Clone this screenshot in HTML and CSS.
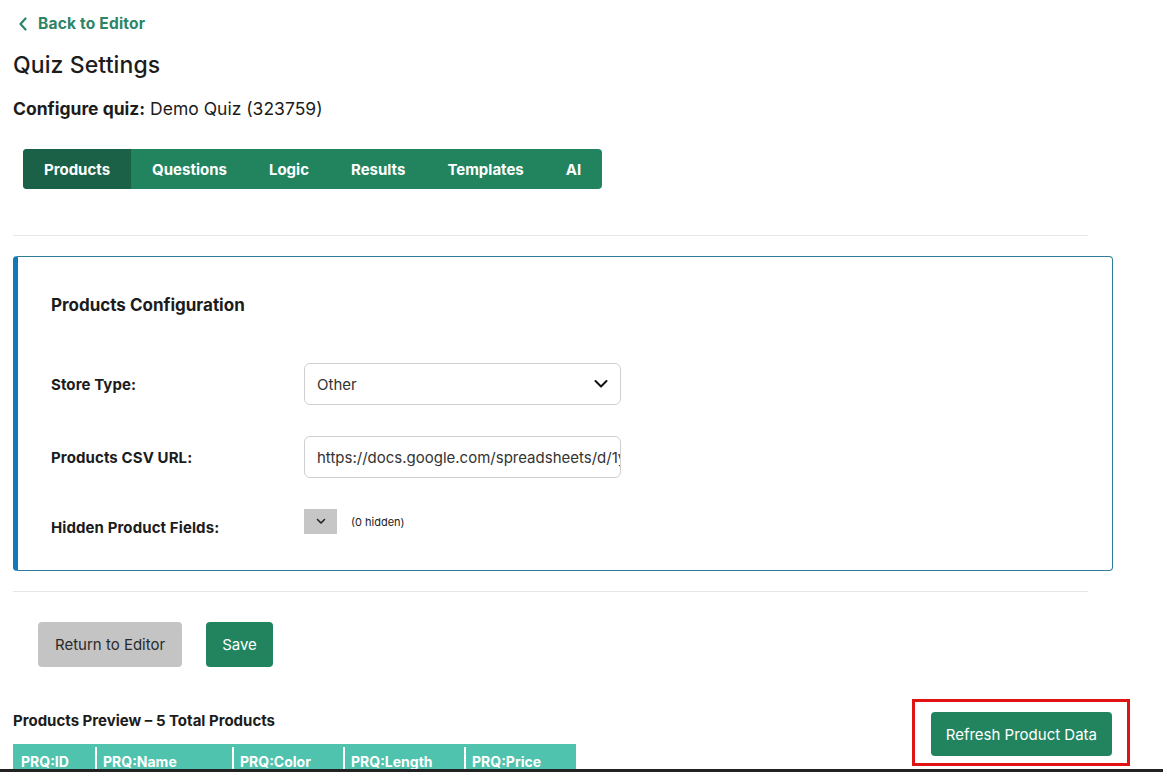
FILE: index.html
```html
<!DOCTYPE html>
<html lang="en">
<head>
    <meta charset="UTF-8">
    <meta name="viewport" content="width=device-width, initial-scale=1.0">
    <title>Quiz Settings</title>
    <link rel="stylesheet" href="styles.css">
</head>
<body>
    <div class="page">
        <a class="back-link" href="#">
            <svg width="10" height="14" viewBox="0 0 10 14"><path d="M7.5 1.5 L2.5 7 L7.5 12.5" fill="none" stroke="currentColor" stroke-width="2.2" stroke-linecap="round" stroke-linejoin="round"/></svg>
            Back to Editor
        </a>
        <h1 class="title">Quiz Settings</h1>
        <p class="subtitle"><b>Configure quiz:</b> Demo Quiz (323759)</p>

        <!-- settings tabs -->
        <nav class="tabs">
            <button class="tab active">Products</button>
            <button class="tab">Questions</button>
            <button class="tab">Logic</button>
            <button class="tab">Results</button>
            <button class="tab">Templates</button>
            <button class="tab">AI</button>
        </nav>

        <hr class="divider">

        <div class="card">
            <h2 class="card-title">Products Configuration</h2>
            <div class="form-row">
                <label class="form-label">Store Type:</label>
                <div class="select">
                    <span>Other</span>
                    <svg width="14" height="10" viewBox="0 0 14 10"><path d="M1.5 2 L7 7.5 L12.5 2" fill="none" stroke="#111" stroke-width="2" stroke-linecap="round" stroke-linejoin="round"/></svg>
                </div>
            </div>
            <div class="form-row">
                <label class="form-label">Products CSV URL:</label>
                <div class="text-input">https://docs.google.com/spreadsheets/d/1y</div>
            </div>
            <div class="form-row hidden-row">
                <label class="form-label">Hidden Product Fields:</label>
                <div class="hidden-fields">
                    <span class="toggle">
                        <svg width="10" height="7" viewBox="0 0 10 7"><path d="M1.5 1.5 L5 5 L8.5 1.5" fill="none" stroke="#222" stroke-width="1.6" stroke-linecap="round" stroke-linejoin="round"/></svg>
                    </span>
                    <span class="hidden-count">(0 hidden)</span>
                </div>
            </div>
        </div>

        <hr class="divider lower">

        <div class="actions">
            <button class="btn btn-grey">Return to Editor</button>
            <button class="btn btn-green">Save</button>
        </div>

        <div class="preview">
            <div class="preview-left">
                <h3 class="preview-title">Products Preview – 5 Total Products</h3>
                <table class="preview-table">
                    <tr>
                        <th class="c-id">PRQ:ID</th>
                        <th class="c-name">PRQ:Name</th>
                        <th class="c-color">PRQ:Color</th>
                        <th class="c-length">PRQ:Length</th>
                        <th class="c-price">PRQ:Price</th>
                    </tr>
                </table>
            </div>
            <div class="refresh-box">
                <button class="btn btn-green refresh">Refresh Product Data</button>
            </div>
        </div>
    </div>
    <div class="screen-edge"></div>
</body>
</html>
```

FILE: styles.css
```css
body {
    margin: 0;
    background: white;
    font-family: Inter, "Noto Sans", sans-serif;
    color: #1c1c1c;
    overflow: hidden;
}
.page {
    padding: 14px 0 0 13px;
    width: 1100px;
}
.back-link {
    display: flex;
    align-items: center;
    gap: 10px;
    margin-left: 5px;
    color: #2b8566;
    font-weight: 700;
    font-size: 15.5px;
    letter-spacing: 0.2px;
    text-decoration: none;
}
.title {
    margin: 18px 0 0;
    font-size: 23px;
    font-weight: 500;
    letter-spacing: 0.1px;
}
.subtitle {
    margin: 19px 0 0;
    font-size: 17.5px;
}
.subtitle b {
    font-weight: 700;
}
.tabs {
    display: inline-flex;
    margin: 30px 0 0 10px;
    background-color: #21845f;
    border-radius: 4px;
    overflow: hidden;
}
.tab {
    height: 40px;
    padding: 0 21px;
    border: none;
    background: none;
    color: white;
    font-family: Inter, "Noto Sans", sans-serif;
    font-size: 15px;
    font-weight: 700;
}
.tab.active {
    background-color: #1a6147;
}
.divider {
    width: 1075px;
    margin: 46px 0 0;
    border: none;
    border-top: 1px solid #e6e6e6;
}
.divider.lower {
    margin-top: 20px;
}
.card {
    margin-top: 20px;
    height: 315px;
    box-sizing: border-box;
    border: 1px solid #2e7d99;
    border-left: 5px solid #1479b5;
    border-radius: 4px;
    padding: 38px 0 0 33px;
}
.card-title {
    margin: 0;
    font-size: 17px;
    font-weight: 700;
}
.form-row {
    display: flex;
    align-items: center;
    margin-top: 48px;
}
.form-row + .form-row {
    margin-top: 31px;
}
.form-label {
    width: 253px;
    font-size: 15px;
    font-weight: 700;
    letter-spacing: 0.1px;
}
.select, .text-input {
    width: 317px;
    height: 42px;
    box-sizing: border-box;
    border: 1px solid #cfcfcf;
    border-radius: 6px;
    padding: 0 12px;
    display: flex;
    align-items: center;
    font-size: 15px;
    color: #333;
    white-space: nowrap;
    overflow: hidden;
}
.select {
    justify-content: space-between;
}
.hidden-row {
    align-items: flex-start;
}
.hidden-row .form-label {
    padding-top: 9px;
}
.hidden-fields {
    display: flex;
    align-items: center;
    gap: 14px;
}
.toggle {
    width: 33px;
    height: 25px;
    background-color: #c6c6c6;
    display: flex;
    align-items: center;
    justify-content: center;
}
.hidden-count {
    font-size: 11px;
    color: #222;
}
.actions {
    display: flex;
    gap: 24px;
    margin: 30px 0 0 25px;
}
.btn {
    height: 45px;
    padding: 0 16px;
    border: none;
    border-radius: 4px;
    font-family: Inter, "Noto Sans", sans-serif;
    font-size: 15px;
}
.btn-grey {
    padding: 0 17px;
    background-color: #c4c4c4;
    color: #2a2a2a;
}
.btn-green {
    background-color: #21845f;
    color: white;
}
.preview {
    display: flex;
    justify-content: space-between;
    align-items: flex-start;
    margin-top: 32px;
}
.preview-left {
    padding-top: 12px;
}
.preview-title {
    margin: 0 0 14px;
    font-size: 15px;
    font-weight: 700;
}
.preview-table {
    border-collapse: collapse;
    background-color: #4fc3ad;
}
.preview-table th {
    height: 32px;
    padding: 6px 6px 0;
    vertical-align: top;
    text-align: left;
    color: white;
    font-size: 14px;
    font-weight: 700;
    border: 2px solid white;
    border-top: 3px solid #4fc3ad;
}
.preview-table th:first-child { border-left: 2px solid #4fc3ad; }
.preview-table th:last-child { border-right: 3px solid #4fc3ad; }
.c-id { width: 68px; }
.c-name { width: 123px; }
.c-color { width: 97px; }
.c-length { width: 107px; }
.c-price { width: 95px; }
.refresh-box {
    margin: 0 -17px 0 0;
    padding: 10px 15px 7px 16px;
    border: 3px solid #e01212;
}
.refresh {
    height: 44px;
    padding: 0 15px;
}
/* dark strip along the bottom edge */
.screen-edge {
    position: fixed;
    left: 0;
    right: 0;
    bottom: 0;
    height: 3px;
    background-color: #222;
}
```
